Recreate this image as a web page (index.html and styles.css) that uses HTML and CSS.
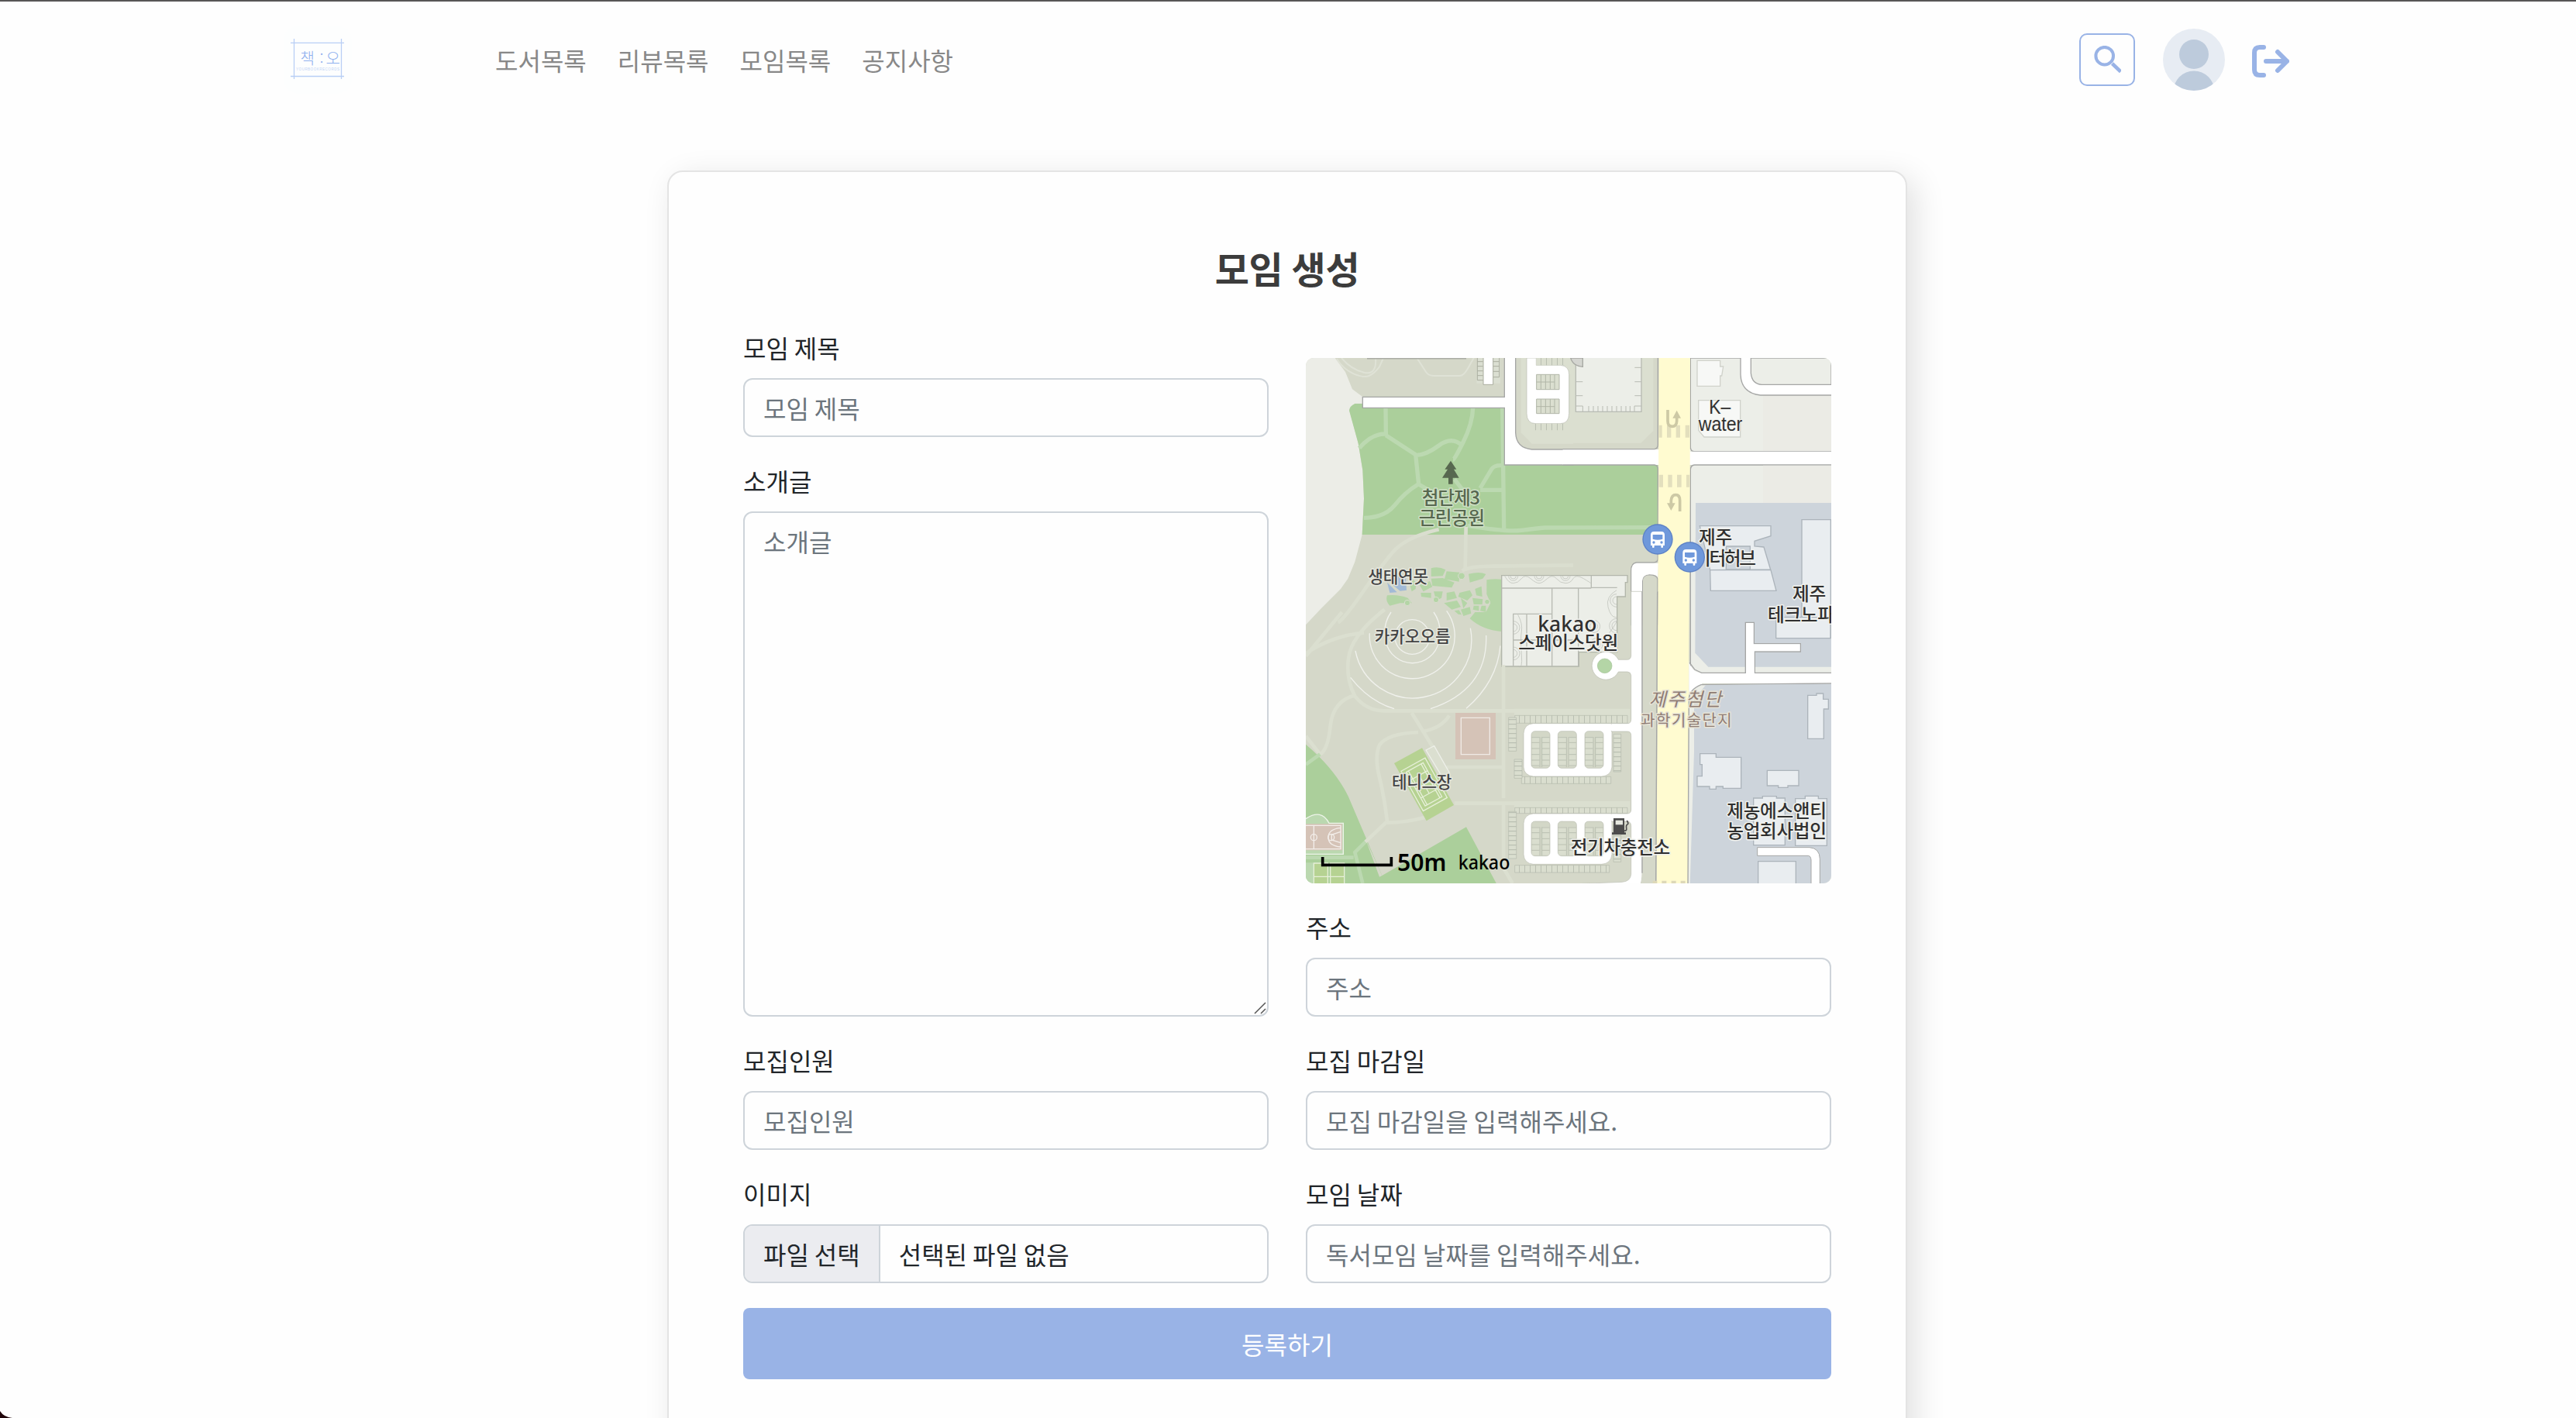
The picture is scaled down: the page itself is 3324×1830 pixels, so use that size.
FILE: index.html
```html
<!DOCTYPE html>
<html lang="ko">
<head>
<meta charset="utf-8">
<title>모임 생성</title>
<link rel="stylesheet" href="styles.css">
</head>
<body>
<header class="navbar">
  <a class="logo" aria-label="책:오">
    <svg width="88" height="88" viewBox="0 0 88 88">
      <rect width="88" height="88" rx="20" fill="#fdfefe"/>
      <path d="M13.5 17v52M74.500 17v52M9 22.300h69M9 65.500h69" stroke="#b9cff5" stroke-width="1.300" fill="none"/>
      <text class="logo-name" y="49.500" x="21.500 46.500 54.500">책:오</text>
      <text class="logo-sub" x="44" y="58" text-anchor="middle" textLength="56">YOUR BOOK RECORDS</text>
    </svg>
  </a>
  <nav class="menu">
    <a>도서목록</a><a>리뷰목록</a><a>모임목록</a><a>공지사항</a>
  </nav>
  <div class="actions">
    <button class="search" type="button" aria-label="검색">
      <svg width="36" height="36" viewBox="0 0 36 36" fill="none" stroke="#99b3e6">
        <circle cx="14.700" cy="13.200" r="11.300" stroke-width="4"/>
        <path d="M24.500 23L35.500 33.500" stroke-width="4.600"/>
      </svg>
    </button>
    <svg class="avatar" width="80" height="80" viewBox="0 0 80 80">
      <defs><clipPath id="face"><circle cx="40" cy="40" r="40"/></clipPath></defs>
      <circle cx="40" cy="40" r="40" fill="#e7ecf3"/>
      <g clip-path="url(#face)" fill="#bdcbdc"><circle cx="40" cy="33" r="19"/><circle cx="40" cy="81" r="26.500"/></g>
    </svg>
    <svg class="logout" width="48" height="42" viewBox="0 0 48 42" fill="none" stroke="#99b3e6" stroke-width="6" stroke-linecap="round" stroke-linejoin="round">
      <path d="M15 3H10Q3 3 3 10v22Q3 39 10 39h5M18 21h27M33 9l12 12L33 33"/>
    </svg>
  </div>
</header>

<main class="card">
  <h1 class="title">모임 생성</h1>
  <form class="grid">
    <div class="col">
      <div class="field"><label>모임 제목</label><input class="control" placeholder="모임 제목"></div>
      <div class="field">
        <label>소개글</label>
        <div class="area-wrap">
          <textarea class="control area" placeholder="소개글"></textarea>
          <svg class="grip" width="16" height="16" viewBox="0 0 16 16" stroke="#555" stroke-width="1.500"><path d="M1 15L15 1M9 15l6-6"/></svg>
        </div>
      </div>
      <div class="field"><label>모집인원</label><input class="control" placeholder="모집인원"></div>
      <div class="field">
        <label>이미지</label>
        <div class="control file"><span class="file-btn">파일 선택</span><span class="file-name">선택된 파일 없음</span></div>
      </div>
    </div>
    <div class="col">
      <div class="map">
<svg width="678" height="678" viewBox="0 0 2034 2034">
  <defs>
    <pattern id="slotV" width="21" height="30" patternUnits="userSpaceOnUse"><rect width="21" height="30" fill="#dadecf"/><path d="M1 0v30" stroke="#b4b9ac" stroke-width="3"/></pattern>
    <pattern id="slotH" width="40" height="18" patternUnits="userSpaceOnUse"><rect width="40" height="18" fill="#dadecf"/><path d="M0 2h40" stroke="#b4b9ac" stroke-width="3"/></pattern>
    <g id="bus">
      <circle r="59" fill="#5d82c6"/><circle r="55" fill="#6f98db"/>
      <path d="M-27-17q0-13 13-13h28q13 0 13 13v41h-6v6q0 3-4 3t-4-3v-6h-26v6q0 3-4 3t-4-3v-6h-6z" fill="#fff"/>
      <path d="M-19-18h38v17q-19 6-38 0z" fill="#6f98db"/><circle cx="-15" cy="12" r="5" fill="#6f98db"/><circle cx="15" cy="12" r="5" fill="#6f98db"/>
    </g>
    <g id="island">
      <rect x="0" y="0" width="72" height="143" rx="14" fill="#d3d7c7" stroke="#b9bdb0" stroke-width="2"/>
      <path d="M3 22h30v115H3zM42 22h27v115H42z" fill="#dadecf"/>
      <path d="M0 24h32M0 44h32M0 67h32M0 90h32M0 112h32M0 133h32M42 24h29M42 44h29M42 67h29M42 90h29M42 112h29M42 133h29M33 22v117M41 22v117" stroke="#bbc0b2" stroke-width="3"/>
    </g>
    <g id="islandShort">
      <rect x="0" y="0" width="72" height="134" rx="14" fill="#d3d7c7" stroke="#b9bdb0" stroke-width="2"/>
      <path d="M3 22h30v108H3zM42 22h27v108H42z" fill="#dadecf"/>
      <path d="M0 24h32M0 44h32M0 67h32M0 90h32M0 112h32M42 24h29M42 44h29M42 67h29M42 90h29M42 112h29M33 22v110M41 22v110" stroke="#bbc0b2" stroke-width="3"/>
    </g>
  </defs>
  <rect width="2034" height="2034" fill="#d5d8c9"/>

  <!-- north-west: grove, park and garden -->
  <g transform="translate(-15 -36)">
    <path d="M0 36H128L168 90 195 157 236 187V212H205L183 235 218 367 235 470 240 580 233 720 205 825 178 890 150 930 75 1005 0 1085z" fill="#ecede7"/>
    <path d="M135 40Q160 80 200 97T260 105 300 70L315 36M153 36Q190 80 240 92T285 36M445 36L480 90Q490 105 510 105H610Q625 105 640 80L665 36" fill="none" stroke="#dfe2d6" stroke-width="6"/>
    <path d="M252 38H636" stroke="#a9aba4" stroke-width="5"/>
    <path d="M678 36h90v98h-92z" fill="#dbdfd2"/>
    <path d="M679 36V122H702M679 50h22M679 68h22M679 86h22M679 104h22M764 36v74h-24M740 50h24M740 68h24M740 88h24" fill="none" stroke="#aaae9f" stroke-width="3"/>
    <path d="M702 30V139H740V30" fill="#fff" stroke="#aaae9f" stroke-width="3"/>
    <path d="M205 213H784V450H1378V720H233L240 580 235 470 218 367 183 240Q184 222 205 213z" fill="#abcf9b"/>
    <g fill="none" stroke="#bcd9b1" stroke-width="16">
      <path d="M324 229L325 330Q270 328 222 385M325 335L440 410 452 525 495 550M440 413Q480 412 530 375T620 375M662 229Q660 290 625 360T585 430M590 505L625 550M450 525Q400 555 360 605T240 655M776 229L782 700M776 452Q745 450 735 465L690 540M690 547H780M640 685Q790 710 850 703T940 693L1378 692"/>
    </g>
    <path d="M530 700Q400 730 350 790T230 950 140 1060M635 690L632 850M620 860Q650 840 760 842L1050 838" fill="none" stroke="#dadecf" stroke-width="14"/>
    <path d="M784 450V229H235V187H784V30H827V325Q829 385 890 390H1050V450z" fill="#fff" stroke="#a5a6a5" stroke-width="4"/>
    <path d="M848 36H1050V368H890L848 325z" fill="#dbdfd0"/>
    <path d="M870 36V250Q870 290 905 290H1000Q1034 285 1034 250V100Q1030 66 1000 64H907V36z" fill="#fff" stroke="#b9bdb0" stroke-width="2"/>
    <path d="M907 36H1013V64H907zM901 290h110v26H901z" fill="url(#slotV)"/>
    <g fill="#dbdfd0" stroke="#b1b6a8" stroke-width="3"><path d="M908 100h88v58h-88zM908 195h88v56h-88zM908 129h70M908 224h70M925 100v58M943 100v58M961 100v58M978 100v58M925 195v56M943 195v56M961 195v56M978 195v56"/></g>
    <!-- garden beds -->
    <path d="M500 850Q530 842 556 856L545 880 500 882zM560 862L610 866 608 902 552 892zM645 872Q690 862 712 873L700 890 650 905zM500 890L545 888 590 905 580 925 505 918zM455 915L495 900 505 922 470 940zM330 955Q370 950 410 965L425 985 380 985 340 995Q322 975 330 955zM430 895L442 905 440 930 425 940 418 915zM460 945H500V965L462 960zM510 940H545L540 965 520 975zM560 945L590 940 600 965 560 975zM610 945L650 935 660 955 640 975 605 960zM670 930L695 920 698 960 675 955zM550 985L600 975 615 1000 580 1010zM615 965L640 985 625 1005zM660 965L700 970 698 990H665zM715 895Q745 890 772 893V1095Q700 1090 650 1045L670 1020 712 1020 730 985 715 950zM615 1010L650 1000 655 1025 625 1035zM665 995H685V1015L662 1010zM695 995H712V1020L690 1015zM590 1015L608 1012 618 1030 605 1028z" fill="#b4d5a6"/>
    <g fill="#b4d5a6" stroke="#dadecf" stroke-width="3"><circle cx="618" cy="880" r="13"/><circle cx="519" cy="972" r="11"/><circle cx="408" cy="984" r="11"/><circle cx="717" cy="980" r="10"/></g>
    <path d="M330 905L368 943 340 945zM372 878L402 882 405 935 380 938 352 915z" fill="#a2bad6"/>
    <!-- office block -->
    <path d="M773 878H1260V905H1252V960H1220V1175H1072V1230H773z" fill="#eceee8" stroke="#b2b6aa" stroke-width="4"/>
    <path d="M773 927H1120M968 927V1230M818 1230V1027H968M870 1027V1230M818 1128H1072M1070 927V1230M1120 878V925H1220" fill="none" stroke="#b8bbb3" stroke-width="4"/>
    <g fill="none" stroke="#b8bbb3" stroke-width="2">
      <path d="M785 880Q800 908 818 908T850 890 885 890 918 908 950 890 985 890 1020 908 1050 890 1090 890 1118 908M836 1030Q855 1065 850 1095T850 1185 836 1230M1218 935Q1175 960 1185 1000T1215 1040 1190 1100"/>
      <path d="M800 880a18 18 0 0 0 36 0M807 880a11 11 0 0 0 22 0M900 880a18 18 0 0 0 36 0M907 880a11 11 0 0 0 22 0M1002 880a18 18 0 0 0 36 0M1009 880a11 11 0 0 0 22 0M818 1055a25 25 0 0 1 0 50M818 1065a15 15 0 0 1 0 30M818 1155a25 25 0 0 1 0 50M818 1165a15 15 0 0 1 0 30M1218 950a25 25 0 0 0 0 50M1218 960a15 15 0 0 0 0 30M1218 1045a28 28 0 0 0 0 56M1218 1055a18 18 0 0 0 0 36"/>
      <circle cx="1130" cy="1075" r="24"/><circle cx="1130" cy="1075" r="15"/><circle cx="1140" cy="1145" r="24"/><circle cx="1140" cy="1145" r="15"/>
    </g>
  </g>

  <!-- north-east: avenue and offices -->
  <g transform="translate(1005 -36)">
    <path d="M30 36H358V378Q358 388 348 388H30z" fill="#d5d8c9"/>
    <path d="M30 36H340V318L292 365H30z" fill="#dbdfd0"/>
    <path d="M-20 64Q14 66 14 100V250Q14 290-20 290" fill="#fff" stroke="#b9bdb0" stroke-width="2"/>
    <path d="M40 30H294V244H40z" fill="#eceee8" stroke="#b8bbb3" stroke-width="4"/>
    <path d="M40 128h27M40 182h27M268 73h26M268 128h26M268 182h26M40 222h27v22M294 222h-27v22M90 222v22M108 222v22M126 222v22M144 222v22M162 222v22M180 222v22M198 222v22M216 222v22M234 222v22M250 222v22" stroke="#b8bbb3" stroke-width="3" fill="none"/>
    <path d="M20 36H67V70Q30 68 20 36z" fill="#d4d5d0" stroke="#a6a8a2" stroke-width="4"/>
    <path d="M484 36H1029V398H500Q484 398 484 382z" fill="#eceee8" stroke="#a5a6a5" stroke-width="4"/>
    <path d="M765 180H1029V396H765z" fill="#ebebe5"/>
    <path d="M1035 180H755Q680 172 678 100V30H718V95Q722 137 760 139H1035z" fill="#fff" stroke="#a5a6a5" stroke-width="4"/>
    <path d="M510 46H599V69H611L605 105H599V145H510zM515 200H677V342H537L515 316z" fill="#f7f8f6" stroke="#d0d2cb" stroke-width="4"/>
    <path d="M-10 390H484V398H1035V450H484V450H-10z" fill="#fff"/>
    <path d="M-10 389H345Q358 386 358 372V36M-10 450H345Q358 452 358 466V815Q356 828 340 828H275Q254 830 254 860V1070H298V900Q298 876 325 875 354 876 357 892V1070" fill="none" stroke="#a5a6a5" stroke-width="4"/>
    <path d="M484 1190V470Q484 451 500 450H1035V1260H484z" fill="#eceee8" stroke="#a5a6a5" stroke-width="4"/>
    <path d="M360 830H275Q256 832 256 860V1100H297V900Q298 876 325 874 358 874 358 890z" fill="#fff"/>
    <path d="M765 452H1035V600H765z" fill="#ebebe5"/>
    <path d="M504 597H1035V1232H553L502 1178z" fill="#cdd4db"/>
    <path d="M362 30H483L482 500 478 1100 474 2000V2200H352L358 1000z" fill="#fffbd0"/>
    <path d="M362 296h12v48h-12zM393 296h16v48h-16zM428 296h16v48h-16zM464 296h16v48h-16zM362 488h16v48h-16zM397 488h16v48h-16zM432 488h17v48h-17zM468 488h13v48h-13z" fill="#e3dfbd"/>
    <g fill="none" stroke="#cdc9a5" stroke-width="11"><path d="M396 237V280Q396 301 413 301T431 280V262"/><path d="M443 630V588Q443 566 427 566T409 588V602"/></g>
    <path d="M415 269L431 239 447 269zM393 598L409 627 425 598z" fill="#cdc9a5"/>
    <g fill="#e9edf0" stroke="#acb4bb" stroke-width="4">
      <path d="M520 686H795V725L732 745V765L768 768 794 855 560 857zM560 857H795L816 937H562zM915 662H1027V1120H915z"/>
      <path d="M622 765H715V855H622z" fill="#cdd4db"/>
    </g>
  </g>

  <!-- south-west: hill, courts and lawns -->
  <g transform="translate(-15 984)">
    <path d="M15 512Q130 610 180 715L310 1020 636 832 755 1055H15z" fill="#abcf9b"/>
    <path d="M310 1020L245 875 300 1025z" fill="#d5d8c9"/>
    <g fill="none" stroke="#dbdfd0" stroke-width="14">
      <path d="M15 160Q120 90 240 80M15 170L130 30 155 0M320-10Q190 90 180 180 170 260 205 325 250 382 320 382H780M205 322Q120 345 110 440T70 550L15 480M780 205V720M780 740H590M780 382H1050M780 600H560M425 390L505 520M450 465Q330 470 300 515 280 560 300 640T330 810M465 462Q540 450 570 400M330 810L245 890M330 815Q400 815 475 795M780 740H1050M780 740V990L815 1050"/>
    </g>
    <path d="M70 550L15 590M245 890L205 930 235 1050M15 950H200" fill="none" stroke="#bcd9b1" stroke-width="14"/>
    <g fill="none" stroke="#f0f1ec" stroke-width="4">
      <circle cx="427" cy="96" r="67"/><path d="M345 0Q310 50 325 115A105 105 0 0 0 530 115Q545 50 510 0M262 82A165 165 0 1 0 560-5M207 150A225 225 0 0 0 652 62M188 253Q260 345 357 374M498 374Q720 300 713 90M636 373Q755 270 768 130"/>
    </g>
    <path d="M594 390H750V570H594z" fill="#d5c3b7"/><path d="M616 409H727V551H616z" fill="none" stroke="#f0ebe6" stroke-width="4"/>
    <path d="M480 534L512 518 570 620 550 650z" fill="#dbdfd0" stroke="#eef0e9" stroke-width="4"/>
    <path d="M357 585L465 526 588 747 482 808z" fill="#b6d292"/>
    <g transform="translate(473 667) rotate(-29)" fill="none" stroke="#e7f0d9" stroke-width="4"><path d="M-53-88H53V88H-53zM-37-75H37V75H-37zM-28-75V75M28-75V75M-37-40H37M-37 0H37M-37 40H37M0-40V40"/></g>
    <path d="M15 800Q75 760 105 817H160V937H15" fill="#bbd8b0" stroke="#edf4e9" stroke-width="4"/>
    <path d="M15 820H156V922H15z" fill="#d5c3b7"/><path d="M15 826H150V917H15M46 826V917M150 835Q102 840 102 872T150 909M150 850L115 862V882L150 893" fill="none" stroke="#f3eeea" stroke-width="4"/><circle cx="46" cy="872" r="12" fill="none" stroke="#f3eeea" stroke-width="4"/><circle cx="113" cy="872" r="12" fill="none" stroke="#f3eeea" stroke-width="4"/>
    <path d="M15 970H46V1050H15z" fill="#bbd8b0"/><path d="M46 972H100V1060H46zM110 972H164V1060H110zM46 1024H164" fill="#b6d292" stroke="#e7f0d9" stroke-width="4"/>
    <!-- parking lots -->
    <path d="M822 374H1270V432H822zM822 732H1270V780H822z" fill="#dbdfd0"/>
    <path d="M824 400H1260V430H824zM850 637H1196V664H850zM824 757H1260V779H824zM824 980H1190V1008H824z" fill="url(#slotV)" stroke="#b4b9ac" stroke-width="2"/>
    <path d="M800 408H830V538H800zM822 570H852V643H822zM800 772H830V954H800z" fill="url(#slotH)" stroke="#b4b9ac" stroke-width="2"/>
    <path d="M858 470Q860 434 895 431H1280V461H1200V600Q1196 634 1160 636H895Q860 632 858 600zM858 818Q860 784 895 780H1280V810H1200V938Q1196 974 1160 976H895Q860 972 858 938z" fill="#fff" stroke="#b9bdb0" stroke-width="2"/>
    <use href="#island" x="888" y="461"/><use href="#island" x="991" y="461"/><use href="#island" x="1095" y="461"/>
    <use href="#islandShort" x="888" y="810"/><use href="#islandShort" x="991" y="810"/><use href="#islandShort" x="1095" y="810"/>
  </g>

  <!-- south-east: service road, plots and buildings -->
  <g transform="translate(1005 984)">
    <path d="M254-80V170Q252 184 238 184H205A54 54 0 1 0 205 231H240Q253 232 254 245V415Q254 431 240 431H178V462H240Q254 462 254 478V765Q254 779 240 780H178V810H240Q254 812 254 828V1015Q252 1042 220 1045L-60 1056H290Q297 1040 297 1010V-80z" fill="#fff" stroke="#b9bdb0" stroke-width="2"/>
    <path d="M-10 434H200V459H-10zM-10 782H200V808H-10z" fill="#fff"/>
    <circle cx="152" cy="208" r="28" fill="#b4d5a6" stroke="#a5c398" stroke-width="2"/>
    <path d="M298-80H357L352 1055H290Q297 1040 297 1010z" fill="#d5d8c9"/><path d="M356-80L350 1055M297-80V1010" stroke="#a5a6a5" stroke-width="4"/>
    <path d="M186 472H215V618H186zM186 822H215V967H186z" fill="url(#slotH)" stroke="#b4b9ac" stroke-width="2"/>
    <path d="M478 190Q490 236 530 236H1035V276H530L478 320z" fill="#fff"/>
    <path d="M480 195L500 222 527 235H697V40H730V122H910V153H733V235H1035" fill="none" stroke="#a5a6a5" stroke-width="4"/>
    <path d="M699 42H728V124H908V151H731V240H699z" fill="#fff"/>
    <path d="M1035 276L525 281Q478 300 478 340L474 1060H1035z" fill="#eceee8" stroke="#a5a6a5" stroke-width="4"/>
    <path d="M543 282L1035 278V1060H482L498 540V340z" fill="#cdd4db"/>
    <g fill="#e9edf0" stroke="#acb4bb" stroke-width="4">
      <path d="M815 20H1026V101H815zM938 322H972V315H998V337H1018V375H1000V490H938zM521 548H583V562H680V682H610V675H583V685H558V675H510V635H529V590H521zM781 613H903V672H861V679H824V672H781zM728 720H763V713H817V720H850V902H728zM890 722H928V712H979V722H1012V904H890zM746 965H892V1060H746z"/>
    </g>
    <path d="M743 911H945Q984 914 985 955V1060H951V960Q950 944 940 943H743z" fill="#fff" stroke="#a5a6a5" stroke-width="3"/>
    <path d="M338 1040h17v15h-17zM373 1040h18v15h-18zM410 1040h18v15h-18zM446 1040h18v15h-18z" fill="#ddd8b8"/>
  </g>

  <!-- place names -->
  <g class="names">
    <g fill="#57684f" stroke="#cfe0c6">
      <path d="M561 398L583 431H573L593 464H569V488H552V464H528L549 431H538z" stroke="none"/>
      <text x="449" y="568" textLength="226">첨단제3</text><text x="437" y="645" textLength="256">근린공원</text>
    </g>
    <g class="small" fill="#444"><text x="241" y="870" textLength="233">생태연못</text><text x="266" y="1102" textLength="294">카카오오름</text><text x="333" y="1666" textLength="232">테니스장</text></g>
    <text class="latin" x="898" y="1058" textLength="228" lengthAdjust="spacingAndGlyphs">kakao</text><text x="823" y="1127" textLength="387">스페이스닷원</text>
    <text class="latin sans" x="1561" y="217" textLength="84" lengthAdjust="spacingAndGlyphs">K–</text><text class="latin sans" x="1520" y="283" textLength="170" lengthAdjust="spacingAndGlyphs">water</text>
    <text x="1521" y="720" textLength="130">제주</text><text x="1503" y="800" textLength="240">이터허브</text>
    <text x="1884" y="940" textLength="130">제주</text><text x="1788" y="1019" textLength="258">테크노파</text>
    <g class="area-name" fill="#8f7c74" stroke="#e6e3d6"><text transform="translate(1328 1347) skewX(-14)" textLength="280">제주첨단</text><text class="sub" x="1297" y="1424" textLength="352">과학기술단지</text></g>
    <text x="1630" y="1779" textLength="386">제농에스앤티</text><text x="1630" y="1857" textLength="386">농업회사법인</text>
    <text x="1025" y="1921" textLength="386">전기차충전소</text>
  </g>
  <g transform="translate(1005 984)"><path d="M186 798H228V853H234V861H180V853H186z" fill="#4c4c4c"/><path d="M194 806h28v17h-28z" fill="#e6e8df"/><path d="M228 846q10 2 8-10t4-14-2-15" fill="none" stroke="#4c4c4c" stroke-width="5"/></g>
  <use href="#bus" x="1362" y="702"/><use href="#bus" x="1486" y="771"/>
  <path d="M65 1932V1963H331V1932" fill="none" stroke="#000" stroke-width="11"/>
  <text class="scale" x="354" y="1985" textLength="190" lengthAdjust="spacingAndGlyphs">50m</text>
  <text class="credit" x="590" y="1979" textLength="200" lengthAdjust="spacingAndGlyphs">kakao</text>
</svg>
      </div>
      <div class="field"><label>주소</label><input class="control" placeholder="주소"></div>
      <div class="field"><label>모집 마감일</label><input class="control" placeholder="모집 마감일을 입력해주세요."></div>
      <div class="field"><label>모임 날짜</label><input class="control" placeholder="독서모임 날짜를 입력해주세요."></div>
    </div>
    <button class="submit" type="button">등록하기</button>
  </form>
</main>
<svg class="corner" width="16" height="9" viewBox="0 0 16 9"><path d="M0 0Q5 8 16 9H0z" fill="#20050a"/></svg>
</body>
</html>
```
FILE: styles.css
```css
* { box-sizing: border-box; }
html { height: 1830px; overflow: hidden; }
body {
  position: relative;
  margin: 0;
  height: 1830px;
  overflow: hidden;
  border-top: 2px solid #575556;
  background: #fefefe;
  color: #212529;
  font: 400 32px/48px "Noto Sans CJK KR", sans-serif;
  word-spacing: -2px;
}
.navbar {
  display: flex;
  align-items: center;
  height: 150px;
  padding: 0 370px 0 366px;
}
.logo { display: block; width: 88px; height: 88px; }
.logo-name { font: 300 20px "Noto Sans CJK KR", sans-serif; fill: #8fb0ee; }
.logo-sub { font: 400 4.5px "Liberation Sans", sans-serif; fill: #c3d4f5; }
.menu { display: flex; gap: 40px; margin-left: 185px; color: #888; }
.actions { display: flex; align-items: center; margin-left: auto; }
.search {
  display: flex;
  align-items: center;
  justify-content: center;
  width: 72px;
  height: 68px;
  padding: 0;
  border: 2px solid #99b3e6;
  border-radius: 10px;
  background: none;
}
.avatar { margin-left: 36px; }
.logout { margin-left: 35px; margin-top: 4px; }

.card {
  width: 1600px;
  height: 1800px;
  margin: 68px 0 0 861px;
  padding: 94px 96px 96px;
  border: 2px solid #e4e4e4;
  border-radius: 20px;
  background: #fefefe;
  box-shadow: 10px 10px 40px rgba(0, 0, 0, .12);
}
.title {
  margin: 0 0 50px;
  color: #3c3c3c;
  font-size: 48px;
  font-weight: 700;
  line-height: 58px;
  letter-spacing: -.3px;
  text-align: center;
}
.grid { display: grid; grid-template-columns: 678px 678px; column-gap: 48px; row-gap: 32px; }
.col { display: flex; flex-direction: column; gap: 32px; }
.field { display: flex; flex-direction: column; gap: 16px; }
.control {
  display: block;
  width: 100%;
  height: 76px;
  margin: 0;
  padding: 12px 24px;
  border: 2px solid #ced4da;
  border-radius: 12px;
  background: #fefefe;
  color: #212529;
  font: inherit;
  word-spacing: inherit;
}
.control::placeholder { color: #6c757d; opacity: 1; }
.area-wrap { position: relative; }
.area { height: 652px; resize: none; }
.grip { position: absolute; right: 3px; bottom: 3px; fill: none; }
.file { display: flex; align-items: stretch; padding: 0; overflow: hidden; }
.file-btn { padding: 12px 24px; border-right: 2px solid #ced4da; background: #ebecf0; }
.file-name { padding: 12px 24px; }
.submit {
  grid-column: 1 / -1;
  height: 92px;
  border: 0;
  border-radius: 8px;
  background: #99b3e6;
  color: #fff;
  font: inherit;
}
.map { width: 678px; height: 678px; margin-top: 38px; border-radius: 10px; overflow: hidden; }
.map svg { display: block; }
.names { font: 500 71px "Noto Sans CJK KR", sans-serif; fill: #303030; stroke: #f1f2ee; stroke-width: 9px; stroke-linejoin: round; }
.names text { paint-order: stroke; }
.names .small { font-size: 64px; stroke: #e6e8df; }
.names .area-name { font-weight: 400; font-size: 72px; }
.names .sub { font-size: 60px; }
.names .latin { font-family: "Noto Sans", sans-serif; font-size: 80px; }
.names .sans { font-family: "Liberation Sans", sans-serif; font-size: 76px; stroke-width: 6px; }
.scale { font: 600 92px "Noto Sans", sans-serif; }
.credit { font: 500 74px "Noto Sans", sans-serif; }
.corner { position: absolute; left: 0; bottom: 0; }
```
